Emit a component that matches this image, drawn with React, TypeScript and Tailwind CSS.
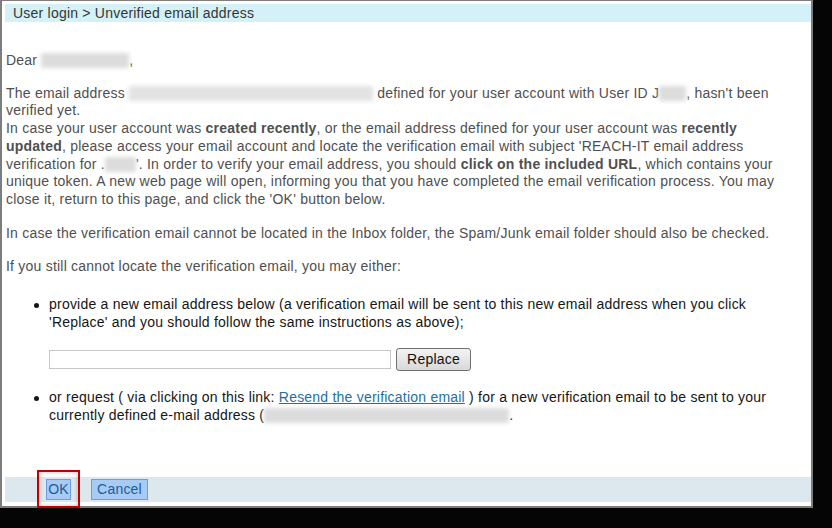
export default function App() {
  const blur = "inline-block h-[15px] align-[-3px] bg-[#dcdcdc] blur-[2px]"

  return (
    <div className="h-[528px] w-[832px] overflow-hidden bg-[#050505] font-['Liberation_Sans',Arial,sans-serif] text-[14px] tracking-[0.22px]">
      {/* Window */}
      <div className="relative flex h-[508px] w-[813px] flex-col border-2 border-t border-[#7d7d7d] bg-white pl-[3px] pt-[3px]">
        {/* Breadcrumb */}
        <div className="h-[18px] bg-[#d3f1f6] pl-[8px] leading-[18px] text-[#353535]">
          User login &gt; Unverified email address
        </div>

        {/* Message */}
        <div className="mt-[30px] w-[796px] pl-[1px] leading-[17.7px] text-[#4f4f4f]">
          <p className="mb-[15px]">
            Dear <span className={`${blur} w-[88px]`} />,
          </p>
          <p className="mb-4">
            The email address <span className={`${blur} w-[244px] bg-[#e2e2e2]`} /> defined for your user
            account with User ID J<span className={`${blur} w-[27px]`} />, hasn&apos;t been verified yet.
            <br />
            In case your user account was <b>created recently</b>, or the email address defined for your
            user account was <b>recently updated</b>, please access your email account and locate the
            verification email with subject &apos;REACH-IT email address verification for .
            <span className={`${blur} w-[31px]`} />&apos;. In order to verify your email address, you should{" "}
            <b>click on the included URL</b>, which contains your unique token. A new web page will open,
            informing you that you have completed the email verification process. You may close it, return
            to this page, and click the &apos;OK&apos; button below.
          </p>
          <p className="mb-4">
            In case the verification email cannot be located in the Inbox folder, the Spam/Junk email folder
            should also be checked.
          </p>
          <p>If you still cannot locate the verification email, you may either:</p>

          {/* Options */}
          <ul className="mt-[20px] text-[#151515]">
            <li className="flex">
              <span className="ml-[28px] mr-[10px] mt-[7px] h-[5px] w-[5px] shrink-0 rounded-full bg-[#151515]" />
              <div>
                <p>
                  provide a new email address below (a verification email will be sent to this new email
                  address when you click &apos;Replace&apos; and you should follow the same instructions as
                  above);
                </p>
                <div className="mt-[17px] flex items-center gap-[5px]">
                  <input className="h-[19px] w-[342px] border border-[#c6c6c6] bg-white outline-none" />
                  <button className="h-[23px] w-[75px] rounded-[3px] border border-[#707070] bg-gradient-to-b from-[#f3f3f3] to-[#d9d9d9] leading-[21px] text-[#111]">
                    Replace
                  </button>
                </div>
              </div>
            </li>
            <li className="mt-[18px] flex">
              <span className="ml-[28px] mr-[10px] mt-[7px] h-[5px] w-[5px] shrink-0 rounded-full bg-[#151515]" />
              <p>
                or request ( via clicking on this link:{" "}
                <a href="#" className="text-[#1d6fa5] underline">
                  Resend the verification email
                </a>{" "}
                ) for a new verification email to be sent to your currently defined e-mail address (
                <span className={`${blur} w-[245px] bg-[#d8d8d8]`} />.
              </p>
            </li>
          </ul>
        </div>

        {/* Footer */}
        <div className="mb-[4px] mt-auto flex h-[25px] items-center bg-[#dce8ee] pl-[41px]">
          <button className="h-[21px] w-[25px] border border-[#6f9ce6] bg-[#a8cbf3] text-center leading-[19px] text-[#1b5d9c]">
            OK
          </button>
          <button className="ml-[20px] h-[21px] w-[57px] border border-[#6f9ce6] bg-[#a8cbf3] text-center leading-[19px] text-[#1b5d9c]">
            Cancel
          </button>
        </div>

        {/* Highlight around OK */}
        <div className="absolute left-[35px] top-[469px] h-[38px] w-[43px] border-2 border-[#c20000] shadow-[inset_0_0_4px_rgba(0,0,0,0.25)]" />
      </div>
    </div>
  )
}
